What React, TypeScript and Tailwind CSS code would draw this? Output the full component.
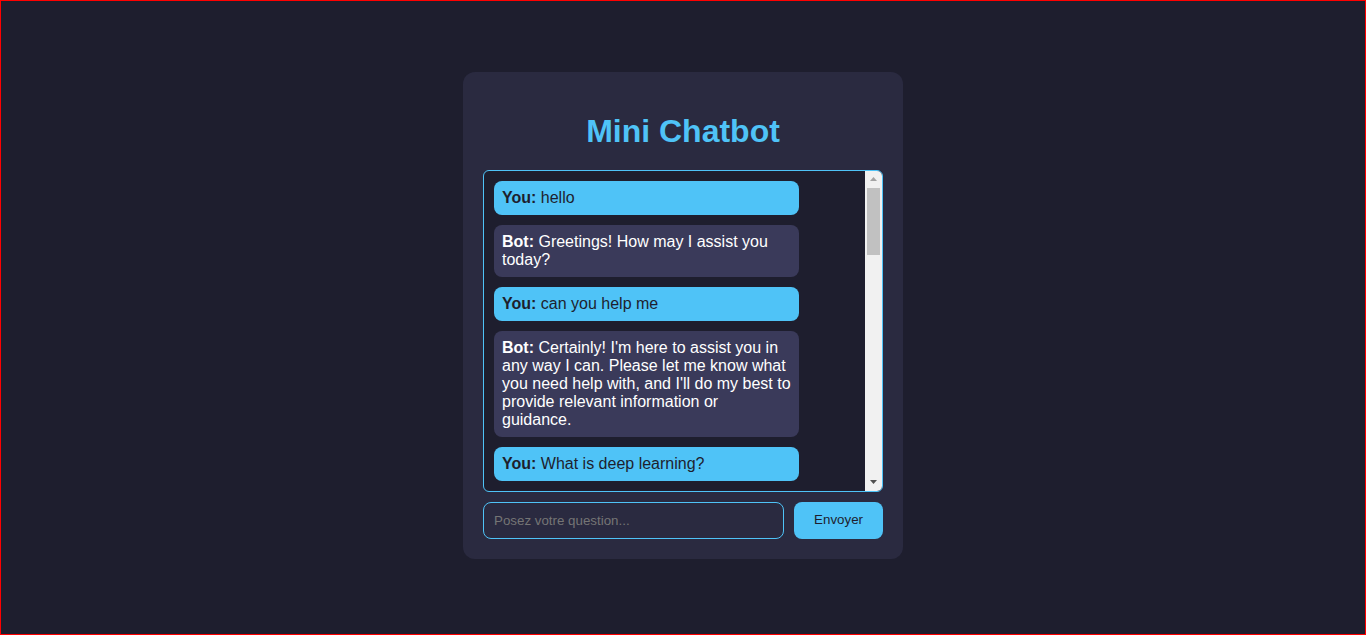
type Message = {
    from: "user" | "bot";
    text: string;
};

const messages: Message[] = [
    { from: "user", text: "hello" },
    { from: "bot", text: "Greetings! How may I assist you today?" },
    { from: "user", text: "can you help me" },
    {
        from: "bot",
        text: "Certainly! I'm here to assist you in any way I can. Please let me know what you need help with, and I'll do my best to provide relevant information or guidance.",
    },
    { from: "user", text: "What is deep learning?" },
    {
        from: "bot",
        text: "Deep learning is a subfield of machine learning that uses artificial neural networks with many layers to learn patterns and representations directly from data.",
    },
];

function Bubble({ message }: Readonly<{ message: Message }>) {
    const isUser = message.from === "user";
    return (
        <div
            className={
                isUser
                    ? "w-[305px] shrink-0 rounded-lg bg-[#4fc3f7] px-2 py-2 leading-[18px] text-[#1e1e2e]"
                    : "w-[305px] shrink-0 rounded-lg bg-[#3a3a5a] px-2 py-2 leading-[18px] text-white"
            }
        >
            <strong className="font-bold">{isUser ? "You:" : "Bot:"}</strong>{" "}
            {message.text}
        </div>
    );
}

// classic windows-style scrollbar, drawn since the headless page hides the real one
function Scrollbar() {
    return (
        <div className="flex w-[17px] shrink-0 flex-col bg-[#f1f1f1]">
            <div className="flex h-[17px] items-center justify-center">
                <svg width="7" height="4" viewBox="0 0 7 4">
                    <polygon points="3.5,0 7,4 0,4" fill="#a3a3a3" />
                </svg>
            </div>
            <div className="flex-1 px-[2px]">
                <div className="h-[67px] bg-[#c1c1c1]" />
            </div>
            <div className="flex h-[17px] items-center justify-center">
                <svg width="7" height="4" viewBox="0 0 7 4">
                    <polygon points="0,0 7,0 3.5,4" fill="#505050" />
                </svg>
            </div>
        </div>
    );
}

export default function App() {
    return (
        <div className="box-border flex h-[635px] items-center justify-center border border-[#ff0000] bg-[#1e1e2e] pb-[5px] font-['Liberation_Sans',Arial,sans-serif]">
            <div className="w-[440px] rounded-xl bg-[#2a2a40] p-5">
                <h1 className="mt-[21px] mb-[20px] text-center text-[32px] leading-[37px] font-bold text-[#4fc3f7]">
                    Mini Chatbot
                </h1>

                <div className="flex h-[322px] overflow-hidden rounded-md border border-[#4fc3f7] bg-[#1e1e2e] text-base">
                    <div className="flex flex-1 flex-col gap-[10px] overflow-hidden p-[10px]">
                        {messages.map((message, index) => (
                            <Bubble key={index} message={message} />
                        ))}
                    </div>
                    <Scrollbar />
                </div>

                <div className="mt-[10px] flex gap-[10px]">
                    <input
                        type="text"
                        placeholder="Posez votre question..."
                        className="h-[37px] min-w-0 flex-1 rounded-lg border border-[#4fc3f7] bg-[#2a2a40] px-[10px] text-[13.33px] text-white outline-none placeholder:text-[#757575]"
                    />
                    <button
                        type="button"
                        className="h-[37px] rounded-lg bg-[#4fc3f7] px-5 text-[13.33px] text-[#1e1e2e]"
                    >
                        Envoyer
                    </button>
                </div>
            </div>
        </div>
    );
}
